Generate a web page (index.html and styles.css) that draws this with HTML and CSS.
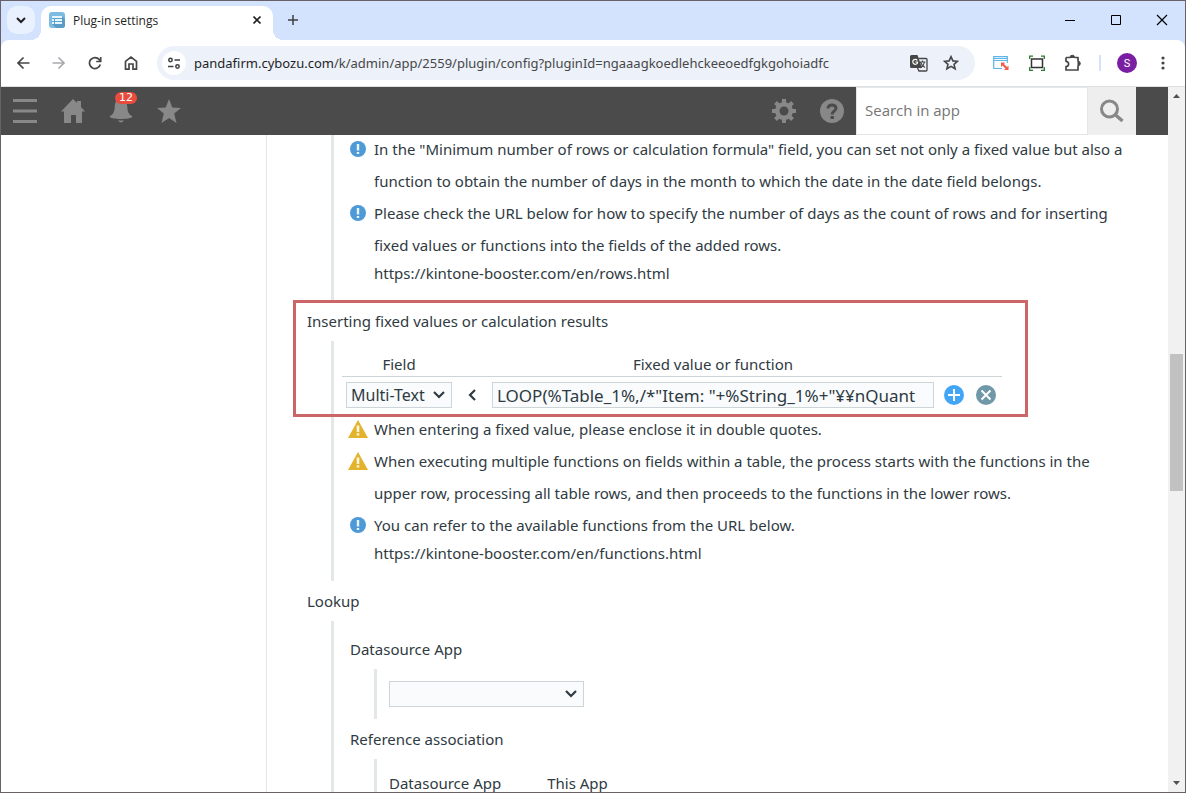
FILE: index.html
```html
<!DOCTYPE html>
<html lang="en">
<head>
    <meta charset="UTF-8">
    <title>Plug-in settings</title>
    <link rel="stylesheet" href="styles.css">
</head>
<body>
    <div class="browser">
        <!-- Tab strip -->
        <div class="tabs">
            <button class="tab-search" aria-label="Search tabs">
                <svg width="10" height="8" viewBox="0 0 10 8"><path d="M1 2l4 4 4-4" fill="none" stroke="#1f1f1f" stroke-width="2"/></svg>
            </button>
            <div class="tab">
                <svg width="16" height="16" viewBox="0 0 16 16">
                    <rect width="16" height="16" rx="3" fill="#7cbbe2"/>
                    <path d="M13 4l3 3v6a3 3 0 0 1-3 3H7l-4-4z" fill="#5b9cc7"/>
                    <path d="M3 4h10v8H3z" fill="#e9f5fd"/>
                    <path d="M3 6.5h10M3 9.5h10M5.5 6v6" stroke="#5ba3d2"/>
                </svg>
                <span class="tab-title">Plug-in settings</span>
                <button class="tab-close" aria-label="Close tab">
                    <svg width="10" height="10" viewBox="0 0 10 10"><path d="M1.500 1.500l7 7M8.500 1.500l-7 7" stroke="#1f1f1f" stroke-width="1.700"/></svg>
                </button>
            </div>
            <button class="tab-new" aria-label="New tab">
                <svg width="12" height="12" viewBox="0 0 12 12"><path d="M6 1v10M1 6h10" stroke="#3c4043" stroke-width="1.500"/></svg>
            </button>
            <div class="window-buttons">
                <button aria-label="Minimize"><svg width="10" height="10" viewBox="0 0 10 10"><path d="M0 5.500h10" stroke="#000"/></svg></button>
                <button aria-label="Maximize"><svg width="10" height="10" viewBox="0 0 10 10"><path d="M.5.5h9v9h-9z" fill="none" stroke="#000"/></svg></button>
                <button aria-label="Close"><svg width="12" height="12" viewBox="0 0 12 12"><path d="M1 1l10 10M11 1L1 11" stroke="#000" stroke-width="1.200"/></svg></button>
            </div>
        </div>

        <!-- Toolbar -->
        <div class="toolbar">
            <button aria-label="Back"><svg width="14" height="14" viewBox="0 0 14 14"><path d="M13.500 7H2M7.500 1.500L2 7l5.500 5.500" fill="none" stroke="#454746" stroke-width="1.700"/></svg></button>
            <button aria-label="Forward"><svg width="14" height="14" viewBox="0 0 14 14"><path d="M.5 7H12M6.500 1.500L12 7l-5.500 5.500" fill="none" stroke="#a9abae" stroke-width="1.700"/></svg></button>
            <button aria-label="Reload"><svg width="14" height="14" viewBox="0 0 14 14"><path d="M12.300 8.500A5.500 5.500 0 1 1 11.200 3.500L12.500 5M12.700 1v4.500H8.200" fill="none" stroke="#454746" stroke-width="1.700"/></svg></button>
            <button aria-label="Home"><svg width="14" height="16" viewBox="0 0 14 16"><path d="M1.500 14.200V6.300L7 2l5.500 4.300v7.900H9V9H5v5.200z" fill="none" stroke="#454746" stroke-width="1.700"/></svg></button>
            <div class="address">
                <button class="site-info" aria-label="Site information">
                    <svg width="12" height="12" viewBox="0 0 12 12" fill="none" stroke="#3c4043" stroke-width="1.500"><circle cx="2.500" cy="3" r="1.700"/><path d="M6.500 3H12M0 9.500h5.500"/><circle cx="9.500" cy="9.500" r="1.700"/></svg>
                </button>
                <span class="url"><span class="host">pandafirm.cybozu.com</span>/k/admin/app/2559/plugin/config?pluginId=ngaaagkoedlehckeeoedfgkgohoiadfc</span>
                <button aria-label="Translate this page">
                    <svg width="18" height="18" viewBox="0 0 18 18">
                        <path d="M1.500 1h6l4.500 13H1.500A1.500 1.500 0 0 1 0 12.500v-10A1.500 1.500 0 0 1 1.500 1z" fill="#454746"/>
                        <path d="M8.300 4.500H16a1 1 0 0 1 1 1V16a1 1 0 0 1-1 1H9l-1.500-3" fill="none" stroke="#454746" stroke-width="1.300"/>
                        <path d="M7.300 6.300A2.500 2.500 0 1 0 7.500 9V8H5.300" fill="none" stroke="#fff" stroke-width="1.200"/>
                        <path d="M9.500 8h6M12.500 6.500V8M10.500 8q1 3.500 4.500 5.500M14.500 8q-.5 3.500-4 6" fill="none" stroke="#454746" stroke-width="1.100"/>
                    </svg>
                </button>
                <button aria-label="Bookmark this tab">
                    <svg width="16" height="16" viewBox="0 0 16 16"><path d="M8 1.700l1.900 4.200 4.600.4-3.500 3 1.100 4.500L8 11.400l-4.100 2.400L5 9.300l-3.500-3 4.600-.4z" fill="none" stroke="#454746" stroke-width="1.600"/></svg>
                </button>
            </div>
            <div class="extensions">
                <button aria-label="Window resizer">
                    <svg width="16" height="16" viewBox="0 0 16 16"><path d="M9 13.500H.7V1.700h13.600V8M.7 3.500h13.600M.7 5.500h13.600" fill="none" stroke="#5db5e8" stroke-width="1.200"/><path d="M8 7.500h4L11 9l3 3 1.500-1.500V15H11l1.500-1.500-3-3L8 12z" fill="#f25c48"/></svg>
                </button>
                <button aria-label="Screen capture">
                    <svg width="16" height="16" viewBox="0 0 16 16" fill="none"><path d="M2.500 4h11v8.500h-11z" stroke="#333" stroke-width="1.500"/><path d="M.7 4V1.200H4M12 1.200h3.300V4M15.300 12v3.300H12M4 15.300H.7V12" stroke="#2c7a2c" stroke-width="1.300"/></svg>
                </button>
                <button aria-label="Extensions">
                    <svg width="18" height="18" viewBox="0 0 18 18"><path d="M2 3.500h4.500M10.500 3.500H14V7.500M14 11.500V16H2v-3.500a2.600 2.600 0 0 0 0-5.200V3.500" fill="none" stroke="#454746" stroke-width="1.700" stroke-linejoin="round"/><path d="M6 3.500a2.200 2.200 0 0 1 4.600 0zM14 7.200a2.200 2.200 0 0 1 0 4.600z" fill="#454746" stroke="#454746"/></svg>
                </button>
                <span class="divider"></span>
                <button class="avatar" aria-label="Profile">S</button>
                <button class="more" aria-label="Menu"><svg width="4" height="16" viewBox="0 0 4 16" fill="#454746"><circle cx="2" cy="3" r="1.600"/><circle cx="2" cy="8" r="1.600"/><circle cx="2" cy="13" r="1.600"/></svg></button>
            </div>
        </div>

        <div class="viewport">
            <div class="page">
                <!-- kintone header -->
                <header class="header">
                    <nav class="header-nav">
                        <button aria-label="Menu"><svg width="24" height="24" viewBox="0 0 24 24"><path d="M0 1.500h24M0 12h24M0 22.500h24" stroke="#888" stroke-width="3"/></svg></button>
                        <button aria-label="Portal"><svg width="24" height="24" viewBox="0 0 24 24" fill="#888"><path d="M12 0l4 4V2h4v6l4 4.500h-3V24h-6v-8h-5v8H3V12.500H0z"/></svg></button>
                        <button class="bell" aria-label="Notifications">
                            <svg width="24" height="24" viewBox="0 0 24 24" fill="#888"><path d="M12 0c4.500 0 6 3 6.300 8 .3 5 1.200 7 5.200 9.500-1 1.800-6 2.500-11.500 2.500S1.500 19.300.5 17.500C4.500 15 5.400 13 5.700 8 6 3 7.500 0 12 0zM9 21.500h6q-3 4-6 0z"/></svg>
                            <span class="badge">12</span>
                        </button>
                        <button aria-label="Bookmarks"><svg width="24" height="24" viewBox="0 0 24 24" fill="#888"><path d="M12 0l3.300 8.500 8.700.5-6.800 5.600L19.500 24 12 19l-7.500 5 2.300-9.400L0 9l8.700-.5z"/></svg></button>
                    </nav>
                    <div class="header-tools">
                        <button aria-label="Settings">
                            <svg width="24" height="24" viewBox="0 0 24 24">
                                <circle cx="12" cy="12" r="6.800" fill="none" stroke="#888" stroke-width="4.500"/>
                                <path d="M12 0v4M12 20v4M0 12h4M20 12h4M3.500 3.500l3 3M17.500 17.500l3 3M3.500 20.500l3-3M17.500 6.500l3-3" stroke="#888" stroke-width="4"/>
                            </svg>
                        </button>
                        <button aria-label="Help">
                            <svg width="24" height="24" viewBox="0 0 24 24"><circle cx="12" cy="12" r="12" fill="#888"/><path d="M8 9.500C8 4.500 16 5 16 9.200c0 3-4 2.800-4 6.300" fill="none" stroke="#4b4b4b" stroke-width="3"/><path d="M10.500 17h3.500v3h-3.500z" fill="#4b4b4b"/></svg>
                        </button>
                        <form class="search">
                            <input type="text" placeholder="Search in app" aria-label="Search in app">
                            <button type="button" aria-label="Search"><svg width="24" height="24" viewBox="0 0 24 24" fill="none" stroke="#888"><circle cx="9.500" cy="10" r="8" stroke-width="3"/><path d="M15 15.500l7.500 6.500" stroke-width="3.500"/></svg></button>
                        </form>
                    </div>
                </header>

                <div class="columns">
                    <aside class="sidebar"></aside>
                    <main class="settings">
                        <section class="group">
                            <div class="group-body">
                                <p class="hint info">In the "Minimum number of rows or calculation formula" field, you can set not only a fixed value but also a function to obtain the number of days in the month to which the date in the date field belongs.</p>
                                <p class="hint info">Please check the URL below for how to specify the number of days as the count of rows and for inserting fixed values or functions into the fields of the added rows.</p>
                                <p class="hint-url"><a href="#">https://kintone-booster.com/en/rows.html</a></p>
                            </div>
                        </section>

                        <section class="group highlighted">
                            <h2>Inserting fixed values or calculation results</h2>
                            <div class="group-body">
                                <table class="mapping">
                                    <thead>
                                        <tr>
                                            <th class="col-field">Field</th>
                                            <th class="col-arrow"></th>
                                            <th class="col-value">Fixed value or function</th>
                                            <th class="col-buttons"></th>
                                        </tr>
                                    </thead>
                                    <tbody>
                                        <tr>
                                            <td><select class="field-select" aria-label="Field"><option>Multi-Text</option></select></td>
                                            <td class="arrow"><svg width="8" height="12" viewBox="0 0 8 12"><path d="M7 1L2 6l5 5" fill="none" stroke="#2f3a42" stroke-width="2.200"/></svg></td>
                                            <td><input class="value-input" type="text" aria-label="Fixed value or function" value="LOOP(%Table_1%,/*&quot;Item: &quot;+%String_1%+&quot;¥¥nQuant"></td>
                                            <td>
                                                <div class="row-buttons">
                                                    <button aria-label="Add row"><svg width="20" height="20" viewBox="0 0 20 20"><circle cx="10" cy="10" r="10" fill="#42a5f5"/><path d="M10 4v12M4 10h12" stroke="#fff" stroke-width="2"/></svg></button>
                                                    <button aria-label="Remove row"><svg width="20" height="20" viewBox="0 0 20 20"><circle cx="10" cy="10" r="10" fill="#7098a9"/><path d="M5.500 5.500l9 9M14.500 5.500l-9 9" stroke="#fff" stroke-width="2"/></svg></button>
                                                </div>
                                            </td>
                                        </tr>
                                    </tbody>
                                </table>
                                <p class="hint warn">When entering a fixed value, please enclose it in double quotes.</p>
                                <p class="hint warn">When executing multiple functions on fields within a table, the process starts with the functions in the upper row, processing all table rows, and then proceeds to the functions in the lower rows.</p>
                                <p class="hint info">You can refer to the available functions from the URL below.</p>
                                <p class="hint-url"><a href="#">https://kintone-booster.com/en/functions.html</a></p>
                            </div>
                        </section>

                        <section class="group">
                            <h2>Lookup</h2>
                            <div class="group-body nested">
                                <h3><label for="datasource">Datasource App</label></h3>
                                <div class="sub-body">
                                    <select id="datasource" class="app-select"><option></option></select>
                                </div>
                                <h3>Reference association</h3>
                                <div class="sub-body">
                                    <table class="association">
                                        <thead>
                                            <tr><th>Datasource App</th><th>This App</th></tr>
                                        </thead>
                                    </table>
                                </div>
                            </div>
                        </section>
                    </main>
                </div>
            </div>

            <div class="scrollbar">
                <svg width="7" height="4" viewBox="0 0 7 4"><path d="M0 4l3.500-4L7 4z" fill="#505050"/></svg>
                <div class="track"><div class="thumb"></div></div>
                <svg width="7" height="4" viewBox="0 0 7 4"><path d="M0 0l3.500 4L7 0z" fill="#505050"/></svg>
            </div>
        </div>
    </div>

    <script>
        // Put the matching icon in front of every hint
        const icons = {
            info: '<svg width="16" height="16" viewBox="0 0 16 16"><circle cx="8" cy="8" r="8" fill="#4f9ad6"/><path d="M6.800 3h2.400v6.500H6.800zM6.800 11h2.400v2H6.800z" fill="#e9f4fc"/></svg>',
            warn: '<svg width="20" height="18" viewBox="0 0 20 18"><path d="M10 0l10 18H0z" fill="#e3b32b"/><path d="M8.700 5.500h2.600v6.500H8.700zM8.700 13.300h2.600v2.200H8.700z" fill="#fdf6e0"/></svg>'
        };
        document.querySelectorAll('.hint').forEach(hint => {
            const type = hint.classList.contains('warn') ? 'warn' : 'info';
            hint.insertAdjacentHTML('afterbegin', `<span class="hint-icon">${icons[type]}</span>`);
        });
    </script>
</body>
</html>
```

FILE: styles.css
```css
*, *::before, *::after {
    box-sizing: border-box;
}
body {
    margin: 0;
    font-family: "Noto Sans", "Open Sans", sans-serif;
    font-size: 15px;
    color: #2f3a42;
}
button {
    display: flex;
    align-items: center;
    justify-content: center;
    flex: none;
    padding: 0;
    border: none;
    background: none;
    cursor: pointer;
}
svg {
    display: block;
    flex: none;
}
h2, h3, p {
    margin: 0;
    font-size: 15px;
    font-weight: normal;
}
a {
    color: inherit;
    text-decoration: none;
}
.browser {
    display: flex;
    flex-direction: column;
    height: 100vh;
    border: 1px solid #6b6068;
    background: #d3e2fd;
    overflow: hidden;
}

/* tab strip */
.tabs {
    display: flex;
    flex: none;
    height: 39px;
    padding-left: 6px;
}
.tab-search {
    width: 28px;
    height: 28px;
    margin: 5px 6px 0 0;
    border-radius: 10px;
    background: #e9f1fe;
}
.tab {
    position: relative;
    display: flex;
    align-items: center;
    width: 232px;
    margin-top: 5px;
    padding: 0 8px 6px;
    border-radius: 10px 10px 0 0;
    background: #fff;
}
.tab::before, .tab::after {
    content: "";
    position: absolute;
    bottom: 0;
    width: 10px;
    height: 10px;
}
.tab::before {
    left: -10px;
    background: radial-gradient(circle at 0 0, transparent 10px, #fff 10px);
}
.tab::after {
    right: -10px;
    background: radial-gradient(circle at 100% 0, transparent 10px, #fff 10px);
}
.tab-title {
    flex: 1;
    margin-left: 8px;
    font-family: "Open Sans", sans-serif;
    font-size: 12px;
    color: #1f1f1f;
}
.tab-close {
    width: 16px;
    height: 16px;
}
.tab-new {
    width: 28px;
    height: 28px;
    margin: 5px 0 0 6px;
}
.window-buttons {
    display: flex;
    margin-left: auto;
}
.window-buttons button {
    width: 46px;
    height: 38px;
}

/* toolbar */
.toolbar {
    display: flex;
    align-items: center;
    flex: none;
    height: 47px;
    padding-left: 4px;
    border-bottom: 1px solid #dddfe3;
    border-radius: 8px 8px 0 0;
    background: #fff;
}
.toolbar button {
    width: 36px;
    height: 34px;
}
.address {
    display: flex;
    align-items: center;
    flex: 1;
    min-width: 0;
    height: 34px;
    margin-left: 8px;
    padding: 0 8px 0 5px;
    border-radius: 17px;
    background: #ecf1fa;
}
.toolbar .address button {
    width: 32px;
}
.toolbar .address .site-info {
    width: 24px;
    height: 24px;
    border-radius: 50%;
    background: #fff;
}
.url {
    flex: 1;
    margin-left: 8px;
    overflow: hidden;
    white-space: nowrap;
    font-size: 13px;
    color: #474747;
}
.host {
    color: #1f1f1f;
}
.extensions {
    display: flex;
    align-items: center;
    margin-left: 8px;
}
.divider {
    width: 2px;
    height: 16px;
    margin: 0 16px 0 8px;
    background: #d3e2fd;
}
.toolbar .avatar {
    width: 20px;
    height: 20px;
    border-radius: 50%;
    background: #7b1fa2;
    color: #fff;
    font-family: Roboto, sans-serif;
    font-size: 11px;
}
.toolbar .more {
    width: 28px;
    margin: 0 8px 0 12px;
}

/* page */
.viewport {
    display: flex;
    flex: 1;
    min-height: 0;
    background: #fff;
}
.page {
    display: flex;
    flex-direction: column;
    flex: 1;
    min-width: 0;
}
.header {
    display: flex;
    justify-content: space-between;
    flex: none;
    height: 48px;
    padding-right: 32px;
    background: #4b4b4b;
}
.header-nav, .header-tools {
    display: flex;
}
.header button {
    width: 48px;
    height: 48px;
}
.bell {
    position: relative;
}
.badge {
    position: absolute;
    top: 5px;
    left: 18px;
    width: 22px;
    border-radius: 6px;
    background: #e74c3c;
    color: #fff;
    font-family: "DejaVu Sans", sans-serif;
    font-size: 11px;
    line-height: 12px;
}
.search {
    display: flex;
    background: #fff;
}
.search input {
    width: 232px;
    padding: 0 8px 2px;
    border: 1px solid #e3e7e8;
    font-family: "Open Sans", sans-serif;
    font-size: 15px;
}
.search input::placeholder {
    color: #757575;
}
.header .search button {
    background: #eee;
}
.columns {
    display: flex;
    flex: 1;
    min-height: 0;
    overflow: hidden;
}
.sidebar {
    flex: none;
    width: 266px;
    border-right: 1px solid #e3e7e8;
}
.settings {
    flex: 1;
    min-width: 0;
    margin-top: -2px;
    padding: 0 40px;
}

/* setting groups */
.group {
    position: relative;
}
.group h2, .group h3 {
    line-height: 40px;
}
.group-body {
    margin-left: 24px;
    padding: 0 0 16px 16px;
    border-left: 3px solid #e3e7e8;
}
.nested {
    padding-top: 8px;
}
.sub-body {
    margin-left: 24px;
    padding: 12px;
    border-left: 3px solid #e3e7e8;
}
.highlighted::after {
    content: "";
    position: absolute;
    top: -1px;
    left: -14px;
    width: 735px;
    height: 117px;
    border: 3px solid #cc6666;
    pointer-events: none;
}
.hint {
    position: relative;
    padding-left: 24px;
    line-height: 32px;
}
.hint-icon {
    position: absolute;
    top: 0;
    left: 0;
    display: flex;
    align-items: center;
    justify-content: center;
    width: 16px;
    height: 32px;
}
.hint-url {
    padding-left: 24px;
    line-height: 24px;
}

/* tables */
table {
    border-spacing: 0;
}
th, td {
    padding: 0;
    font-weight: normal;
    line-height: 24px;
}
.mapping {
    width: 660px;
    margin-left: -8px;
    table-layout: fixed;
}
.mapping th {
    height: 36px;
    border-bottom: 1px solid #cdd5d9;
    vertical-align: bottom;
    line-height: 23px;
}
.mapping td {
    height: 36px;
    padding: 0 4px;
}
.col-field {
    width: 114px;
}
.col-arrow {
    width: 32px;
}
.col-buttons {
    width: 64px;
}
.arrow svg {
    margin: 0 auto;
}
select, .value-input {
    display: block;
    height: 26px;
    border: 1px solid #cdd5d9;
    border-radius: 0;
    background-color: #f9fbfd;
    color: #2f3a42;
    font-family: "Noto Sans", sans-serif;
    font-size: 16px;
}
.value-input {
    width: 100%;
    padding: 0 4px;
    font-size: 17px;
}
select {
    appearance: none;
    padding: 0 24px 0 4px;
    background-image: url("data:image/svg+xml,%3Csvg xmlns='http://www.w3.org/2000/svg' width='12' height='8'%3E%3Cpath d='M1 1l5 5 5-5' fill='none' stroke='%232f3a42' stroke-width='2.200'/%3E%3C/svg%3E");
    background-repeat: no-repeat;
    background-position: right 6px center;
}
.field-select {
    width: 100%;
}
.app-select {
    width: 195px;
}
.row-buttons {
    display: flex;
    justify-content: center;
    gap: 12px;
}
.association th {
    padding-right: 46px;
    text-align: left;
}

/* scrollbar */
.scrollbar {
    display: flex;
    flex-direction: column;
    align-items: center;
    flex: none;
    width: 17px;
    padding: 7px 0;
    background: #f1f1f1;
}
.track {
    flex: 1;
    width: 13px;
}
.thumb {
    height: 20%;
    margin-top: 256px;
    background: #c1c1c1;
}
```
